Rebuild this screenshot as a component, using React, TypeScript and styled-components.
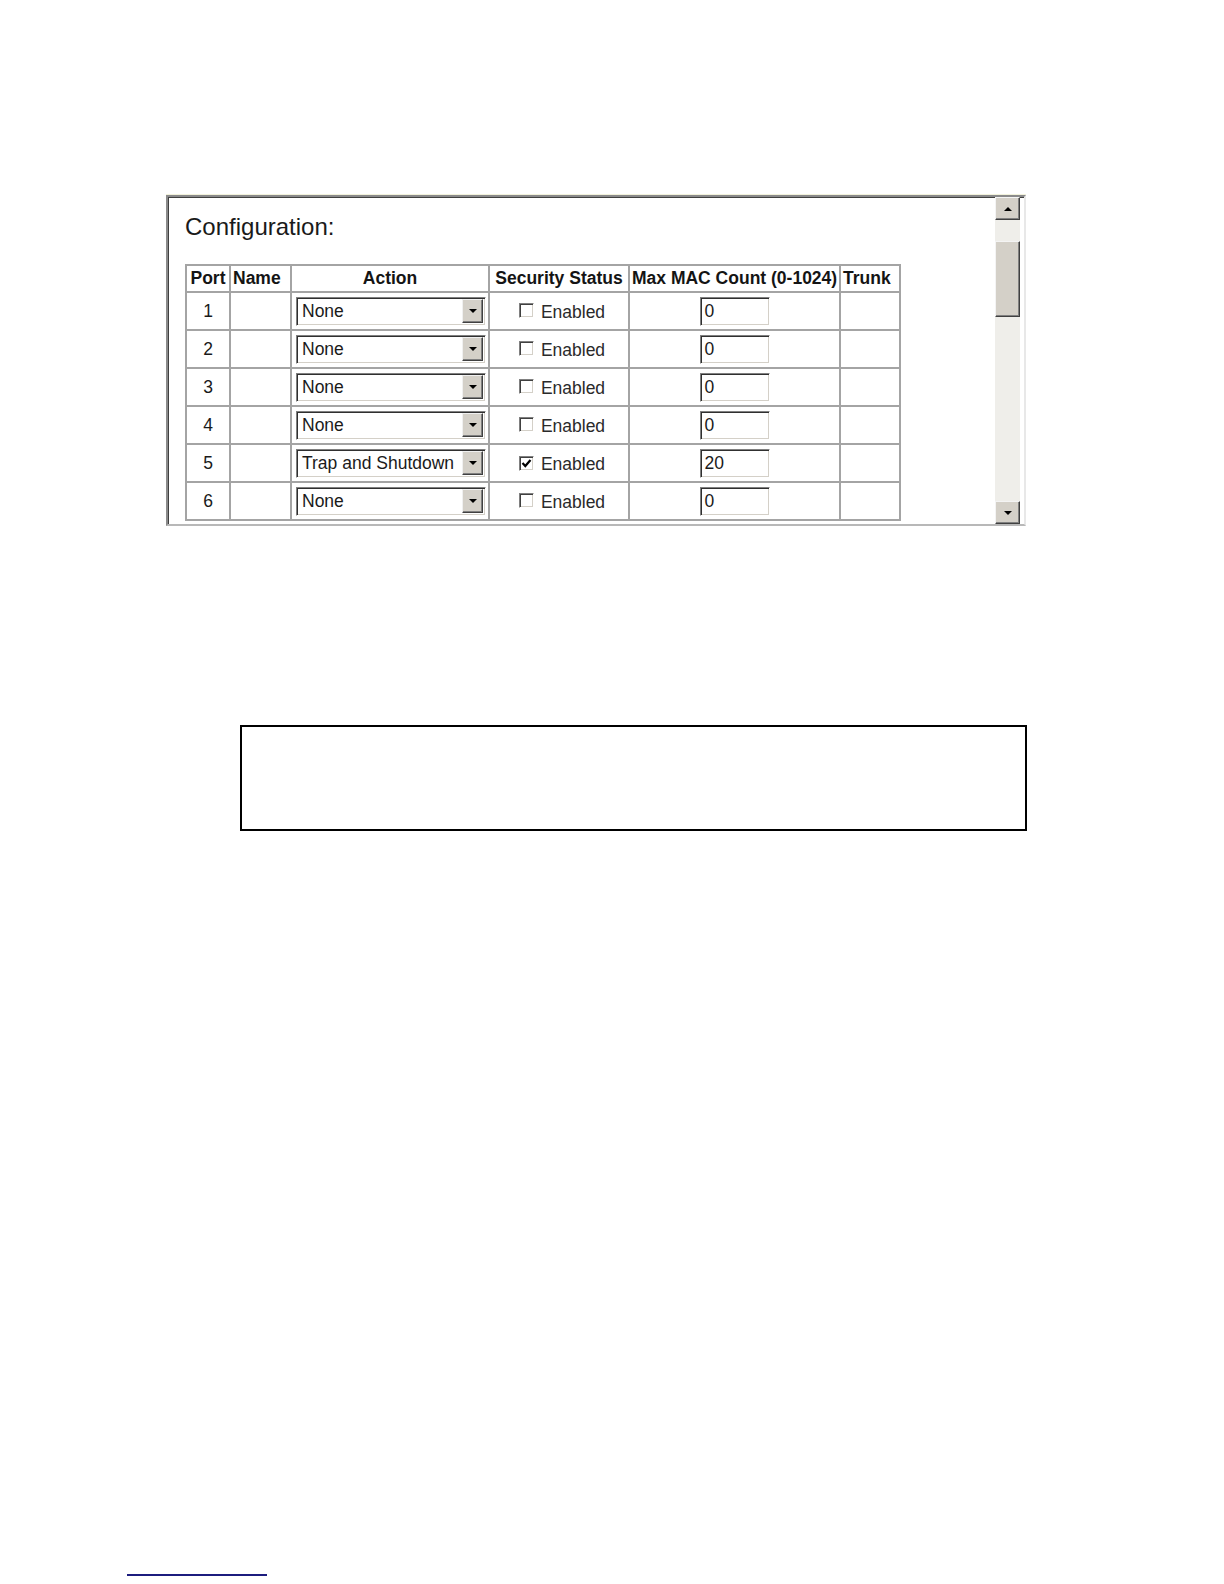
import styled, { createGlobalStyle } from "styled-components";

const GlobalStyle = createGlobalStyle`
	html, body {
		margin: 0;
		padding: 0;
		background: #ffffff;
	}
	body {
		font-family: "Liberation Sans", Arial, sans-serif;
	}
`;

const Page = styled.div`
	width: 1224px;
	height: 1584px;
	padding-top: 195px;
	box-sizing: border-box;
	display: flex;
	flex-direction: column;
	align-items: flex-start;
	overflow: hidden;
`;

const Frame = styled.div`
	margin-left: 166px;
	width: 860px;
	height: 331px;
	box-sizing: border-box;
	border: 2px solid;
	border-color: #8a8a8a #e8e8e8 #b8b8b8 #8a8a8a;
	box-shadow: inset 1px 1px 0 #404040, 0 -1px 0 #f2f2dc;
	display: flex;
	background: #ffffff;
`;

const Content = styled.div`
	flex: 1;
	overflow: hidden;
	padding: 16px 0 0 17px;
`;

const Title = styled.div`
	font-size: 24px;
	line-height: 28px;
	color: #1a1a1a;
	margin-bottom: 23px;
`;

const Table = styled.table`
	table-layout: fixed;
	width: 716px;
	border-collapse: separate;
	border-spacing: 0;
	border-left: 2px solid #a4a4a4;
	border-top: 2px solid #a4a4a4;
`;

const HeadCell = styled.th<{ $align?: string }>`
	box-sizing: border-box;
	height: 27px;
	padding: 0 2px;
	border-right: 2px solid #a4a4a4;
	border-bottom: 2px solid #a4a4a4;
	font-size: 17.5px;
	font-weight: bold;
	color: #141414;
	text-align: ${(p) => p.$align || "center"};
	white-space: nowrap;
	overflow: hidden;
`;

const Cell = styled.td<{ $align?: string }>`
	box-sizing: border-box;
	height: 38px;
	padding: 0 4px;
	border-right: 2px solid #a4a4a4;
	border-bottom: 2px solid #a4a4a4;
	font-size: 17.5px;
	color: #1a1a1a;
	text-align: ${(p) => p.$align || "center"};
	vertical-align: middle;
	white-space: nowrap;
`;

const SelectBox = styled.div`
	width: 190px;
	height: 29px;
	box-sizing: border-box;
	border: 1px solid;
	border-color: #808080 #ffffff #ffffff #808080;
	box-shadow: inset 1px 1px 0 #303030, inset -1px -1px 0 #d4d0c8;
	display: flex;
	align-items: center;
	padding: 2px;
	background: #ffffff;
`;

const SelectText = styled.span`
	flex: 1;
	padding-left: 3px;
	font-size: 17.5px;
	color: #1a1a1a;
	text-align: left;
	overflow: hidden;
`;

const ArrowButton = styled.span`
	width: 21px;
	height: 24px;
	box-sizing: border-box;
	background: #d4d0c8;
	border: 1px solid;
	border-color: #f0f0f0 #404040 #404040 #f0f0f0;
	box-shadow: inset -1px -1px 0 #808080;
	display: flex;
	align-items: center;
	justify-content: center;
`;

const Triangle = styled.span<{ $up?: boolean }>`
	width: 0;
	height: 0;
	border-left: 4px solid transparent;
	border-right: 4px solid transparent;
	${(p) => (p.$up ? "border-bottom: 4px solid #000;" : "border-top: 4px solid #000;")}
`;

const CheckLabel = styled.span`
	display: inline-flex;
	align-items: center;
	gap: 7px;
	margin-left: 6px;
	margin-top: 3px;
	color: #2a2a2a;
	font-size: 17.5px;
`;

const CheckSquare = styled.span`
	width: 15px;
	height: 15px;
	box-sizing: border-box;
	border: 1px solid;
	border-color: #808080 #ffffff #ffffff #808080;
	box-shadow: inset 1px 1px 0 #404040, inset -1px -1px 0 #d4d0c8;
	background: #ffffff;
	display: flex;
	align-items: center;
	justify-content: center;
	margin-top: -3px;
`;

const TextInput = styled.div`
	display: inline-block;
	width: 70px;
	height: 29px;
	box-sizing: border-box;
	border: 1px solid;
	border-color: #808080 #ffffff #ffffff #808080;
	box-shadow: inset 1px 1px 0 #303030, inset -1px -1px 0 #d4d0c8;
	padding: 0 4px;
	font-size: 17.5px;
	line-height: 27px;
	color: #1a1a1a;
	text-align: left;
	vertical-align: middle;
	background: #ffffff;
`;

const Scrollbar = styled.div`
	width: 25px;
	margin-right: 4px;
	display: flex;
	flex-direction: column;
	background: #efeeea;
`;

const ScrollButton = styled.div`
	height: 23px;
	box-sizing: border-box;
	background: #d4d0c8;
	border: 1px solid;
	border-color: #f4f4f4 #404040 #404040 #f4f4f4;
	box-shadow: inset -1px -1px 0 #808080;
	display: flex;
	align-items: center;
	justify-content: center;
`;

const Track = styled.div`
	flex: 1;
	padding-top: 21px;
`;

const Thumb = styled.div`
	height: 76px;
	box-sizing: border-box;
	background: #d4d0c8;
	border: 1px solid;
	border-color: #f4f4f4 #404040 #404040 #f4f4f4;
	box-shadow: inset -1px -1px 0 #808080;
`;

const NoteBox = styled.div`
	margin-left: 240px;
	margin-top: 199px;
	width: 787px;
	height: 106px;
	box-sizing: border-box;
	border: 2px solid #000000;
`;

const LinkRule = styled.div`
	margin-left: 127px;
	margin-top: 743px;
	width: 140px;
	height: 2px;
	background: #1c1c7e;
`;

const rows = [
	{ port: 1, action: "None", enabled: false, max: "0" },
	{ port: 2, action: "None", enabled: false, max: "0" },
	{ port: 3, action: "None", enabled: false, max: "0" },
	{ port: 4, action: "None", enabled: false, max: "0" },
	{ port: 5, action: "Trap and Shutdown", enabled: true, max: "20" },
	{ port: 6, action: "None", enabled: false, max: "0" },
];

function Check({ on }: { on: boolean }) {
	return (
		<CheckSquare>
			{on && (
				<svg width="11" height="11" viewBox="0 0 11 11">
					<path d="M1.5 5 L4.3 8 L9.5 2" fill="none" stroke="#000" strokeWidth="2.2" />
				</svg>
			)}
		</CheckSquare>
	);
}

export default function App() {
	return (
		<>
			<GlobalStyle />
			<Page>
				<Frame>
					<Content>
						<Title>Configuration:</Title>
						<Table>
							<colgroup>
								<col style={{ width: 44 }} />
								<col style={{ width: 61 }} />
								<col style={{ width: 198 }} />
								<col style={{ width: 140 }} />
								<col style={{ width: 211 }} />
								<col style={{ width: 60 }} />
							</colgroup>
							<thead>
								<tr>
									<HeadCell>Port</HeadCell>
									<HeadCell $align="left">Name</HeadCell>
									<HeadCell>Action</HeadCell>
									<HeadCell>Security Status</HeadCell>
									<HeadCell>Max MAC Count (0-1024)</HeadCell>
									<HeadCell $align="left">Trunk</HeadCell>
								</tr>
							</thead>
							<tbody>
								{rows.map((r) => (
									<tr key={r.port}>
										<Cell>{r.port}</Cell>
										<Cell />
										<Cell $align="left">
											<SelectBox>
												<SelectText>{r.action}</SelectText>
												<ArrowButton>
													<Triangle />
												</ArrowButton>
											</SelectBox>
										</Cell>
										<Cell>
											<CheckLabel>
												<Check on={r.enabled} />
												Enabled
											</CheckLabel>
										</Cell>
										<Cell>
											<TextInput>{r.max}</TextInput>
										</Cell>
										<Cell />
									</tr>
								))}
							</tbody>
						</Table>
					</Content>
					<Scrollbar>
						<ScrollButton>
							<Triangle $up />
						</ScrollButton>
						<Track>
							<Thumb />
						</Track>
						<ScrollButton>
							<Triangle />
						</ScrollButton>
					</Scrollbar>
				</Frame>
				<NoteBox />
				<LinkRule />
			</Page>
		</>
	);
}
